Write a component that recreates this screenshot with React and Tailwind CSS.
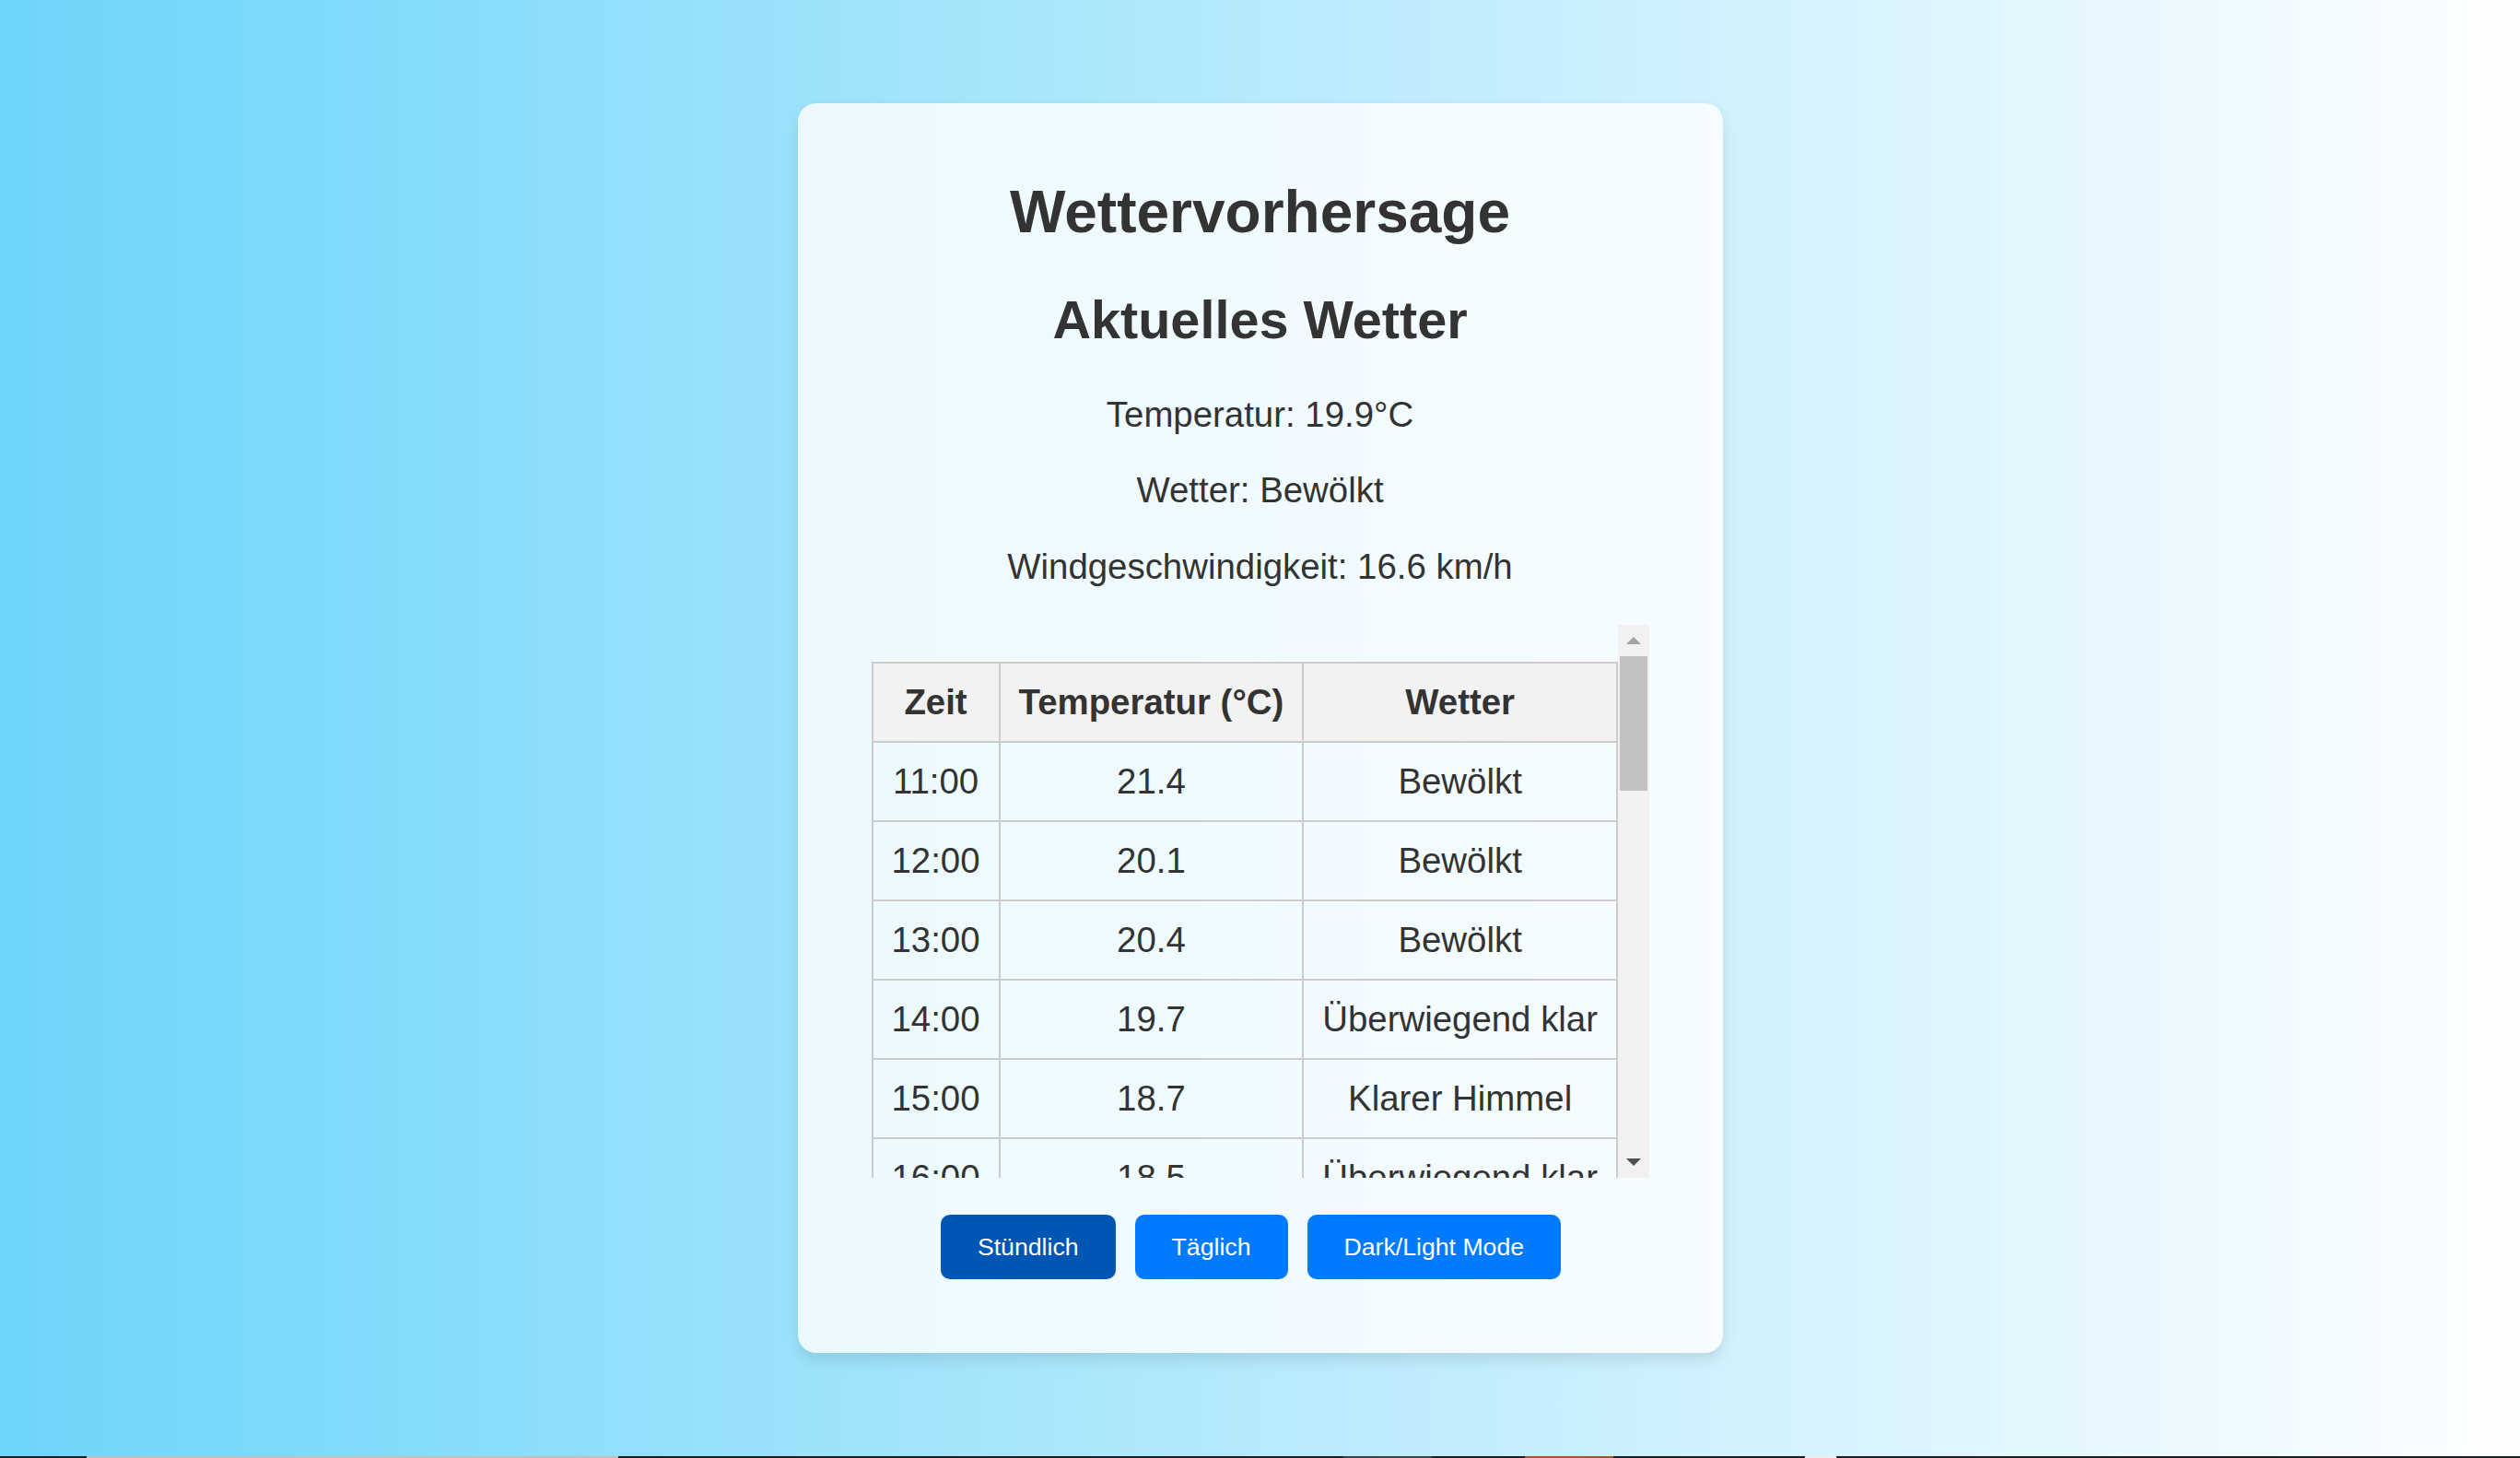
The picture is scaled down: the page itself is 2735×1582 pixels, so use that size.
const hourly = [
  ["11:00", "21.4", "Bewölkt"],
  ["12:00", "20.1", "Bewölkt"],
  ["13:00", "20.4", "Bewölkt"],
  ["14:00", "19.7", "Überwiegend klar"],
  ["15:00", "18.7", "Klarer Himmel"],
  ["16:00", "18.5", "Überwiegend klar"],
  ["17:00", "17.9", "Klarer Himmel"],
  ["18:00", "16.8", "Klarer Himmel"],
  ["19:00", "15.6", "Klarer Himmel"],
  ["20:00", "14.2", "Überwiegend klar"],
  ["21:00", "13.5", "Bewölkt"],
  ["22:00", "12.9", "Bewölkt"],
  ["23:00", "12.4", "Bewölkt"],
  ["00:00", "12.0", "Bewölkt"],
  ["01:00", "11.7", "Bewölkt"],
  ["02:00", "11.3", "Bewölkt"],
  ["03:00", "11.0", "Überwiegend klar"],
  ["04:00", "10.8", "Überwiegend klar"],
  ["05:00", "10.6", "Klarer Himmel"],
  ["06:00", "10.9", "Klarer Himmel"],
  ["07:00", "12.1", "Klarer Himmel"],
  ["08:00", "14.0", "Überwiegend klar"],
  ["09:00", "16.2", "Bewölkt"],
  ["10:00", "18.3", "Bewölkt"],
];

// taskbar remnant along the bottom edge
const strip = [
  [94, "#1c1f22"],
  [577, "#c0c0c0"],
  [787, "#1c1f22"],
  [96, "#3c4449"],
  [101, "#1c1f22"],
  [96, "#9b5a23"],
  [208, "#1c1f22"],
  [34, "#eeeeee"],
  [742, "#1c1f22"],
];

function Scrollbar() {
  return (
    <div className="w-[34px] h-full bg-[#f1f1f1] flex flex-col items-center">
      <div className="h-[34px] w-full flex items-center justify-center">
        <svg width="16" height="8" viewBox="0 0 16 8">
          <polygon points="8,0 16,8 0,8" fill="#a3a3a3" />
        </svg>
      </div>
      <div className="w-[30px] h-[146px] bg-[#c1c1c1]" />
      <div className="flex-1" />
      <div className="h-[34px] w-full flex items-center justify-center">
        <svg width="16" height="8" viewBox="0 0 16 8">
          <polygon points="0,0 16,0 8,8" fill="#505050" />
        </svg>
      </div>
    </div>
  );
}

export default function App() {
  const cell = "border-2 border-[#cccccc] p-[20px] text-center whitespace-nowrap";
  return (
    <div className="w-full font-['Liberation_Sans',Arial,sans-serif] text-[#333333]">
      <div className="h-[1580px] flex items-center justify-center bg-linear-to-r/srgb from-[#6dd5fa] to-white">
        <div className="w-[1004px] bg-white/80 rounded-[20px] shadow-[0_8px_16px_rgba(0,0,0,0.1)] px-[80px] pt-[82px] pb-[80px] flex flex-col items-center">
          <h1 className="text-[64px] font-bold leading-[1.15] mb-[47px]">Wettervorhersage</h1>
          <h2 className="text-[57.6px] font-bold leading-[1.15] mb-[47px]">Aktuelles Wetter</h2>
          <p className="text-[38.4px] leading-[1.15] mb-[38.5px]">Temperatur: 19.9°C</p>
          <p className="text-[38.4px] leading-[1.15] mb-[38.5px]">Wetter: Bewölkt</p>
          <p className="text-[38.4px] leading-[1.15] mb-[40.5px]">Windgeschwindigkeit: 16.6 km/h</p>

          <div className="w-full h-[600px] flex mb-[40px]">
            <div className="flex-1 h-full overflow-hidden pt-[40px]">
              <table className="w-full border-collapse text-[38.4px] leading-[1.15]">
                <thead>
                  <tr className="bg-[#f2f2f2]">
                    <th className={cell + " w-[138px] font-bold"}>Zeit</th>
                    <th className={cell + " w-[332px] font-bold"}>Temperatur (°C)</th>
                    <th className={cell + " font-bold"}>Wetter</th>
                  </tr>
                </thead>
                <tbody>
                  {hourly.map(([t, temp, w]) => (
                    <tr key={t}>
                      <td className={cell}>{t}</td>
                      <td className={cell}>{temp}</td>
                      <td className={cell}>{w}</td>
                    </tr>
                  ))}
                </tbody>
              </table>
            </div>
            <Scrollbar />
          </div>

          <div className="flex gap-[21px] pr-[20px] text-[26.67px] leading-[1.15] text-white">
            <button className="bg-[#0056b3] rounded-[10px] px-[40px] py-[20px]">Stündlich</button>
            <button className="bg-[#007bff] rounded-[10px] px-[40px] py-[20px]">Täglich</button>
            <button className="bg-[#007bff] rounded-[10px] px-[40px] py-[20px]">Dark/Light Mode</button>
          </div>
        </div>
      </div>
      <div className="h-[2px] flex">
        {strip.map(([w, c], i) => (
          <div key={i} className="h-full" style={{ width: w, background: c }} />
        ))}
      </div>
    </div>
  );
}
